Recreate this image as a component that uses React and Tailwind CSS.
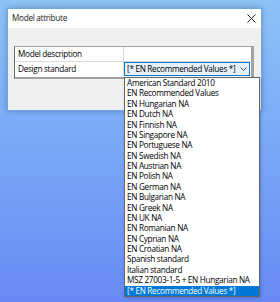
import React from "react";

const items = [
  "American Standard 2010",
  "EN Recommended Values",
  "EN Hungarian NA",
  "EN Dutch NA",
  "EN Finnish NA",
  "EN Singapore NA",
  "EN Portuguese NA",
  "EN Swedish NA",
  "EN Austrian NA",
  "EN Polish NA",
  "EN German NA",
  "EN Bulgarian NA",
  "EN Greek NA",
  "EN UK NA",
  "EN Romanian NA",
  "EN Cyprian NA",
  "EN Croatian NA",
  "Spanish standard",
  "Italian standard",
  "MSZ 27003-1-5 + EN Hungarian NA",
  "[* EN Recommended Values *]",
];

export default function App() {
  return (
    <div
      className="w-[280px] h-[302px] overflow-hidden bg-linear-to-b from-[#8dc3f7] to-[#688af5] pt-[8px] pl-[7px] text-[8.2px] tracking-[-0.3px] text-black"
      style={{ fontFamily: '"Open Sans", "Noto Sans", sans-serif' }}
    >
      <div className="w-[255px] h-[103px] bg-[#f0f0f0] border border-[#6fa6e4] shadow-[0_0_6px_rgba(0,0,0,0.25)] flex flex-col">
        <div className="h-[19px] bg-white flex items-center justify-between pl-[4px] pr-[5px] shrink-0">
          <span className="leading-none text-[#1a1a1a]">Model attribute</span>
          <svg width="9" height="9" viewBox="0 0 9 9" className="block">
            <path d="M0.5 0.5 L8.5 8.5 M8.5 0.5 L0.5 8.5" stroke="#222" strokeWidth="1" fill="none" />
          </svg>
        </div>
        <div className="pt-[18px] pl-[6px]">
          <div className="w-[240px] border-l border-t border-l-[#6b6b6b] border-t-[#a0a0a0] border-r-[3px] border-r-[#a3a3a3] border-b-[2px] border-b-[#a0a0a0] bg-white">
            <div className="flex h-[15px] border-b border-[#d9d9d9]">
              <div className="w-[109px] border-r border-[#d9d9d9] pl-[3px] flex items-center leading-none font-medium">
                Model description
              </div>
              <div className="w-[126px]" />
            </div>
            <div className="flex h-[15px]">
              <div className="w-[109px] border-r border-[#d9d9d9] pl-[3px] flex items-center leading-none font-medium">
                Design standard
              </div>
              <div className="w-[126px] relative">
                <div className="h-[14px] bg-[#e5f1fb] border border-[#0078d7] flex items-center justify-between pl-[2px] pr-[2px]">
                  <span className="leading-none whitespace-nowrap">[* EN Recommended Values *]</span>
                  <svg width="7" height="4" viewBox="0 0 7 4" className="block">
                    <path d="M0.5 0.5 L3.5 3.5 L6.5 0.5" stroke="#444" strokeWidth="1" fill="none" />
                  </svg>
                </div>
                <div className="absolute left-0 top-[15px] w-[136px] h-[220px] bg-white border border-[#646464] shadow-[1px_1px_3px_rgba(0,0,0,0.2)] z-10 flex flex-col">
                  {items.map((t, i) => {
                    const sel = i === items.length - 1;
                    return (
                      <div
                        key={i}
                        className={
                          "h-[10.38px] leading-[10.38px] pl-[2px] whitespace-nowrap " +
                          (sel ? "bg-[#0078d7] text-white" : "")
                        }
                      >
                        {t}
                      </div>
                    );
                  })}
                </div>
              </div>
            </div>
          </div>
        </div>
      </div>
    </div>
  );
}
